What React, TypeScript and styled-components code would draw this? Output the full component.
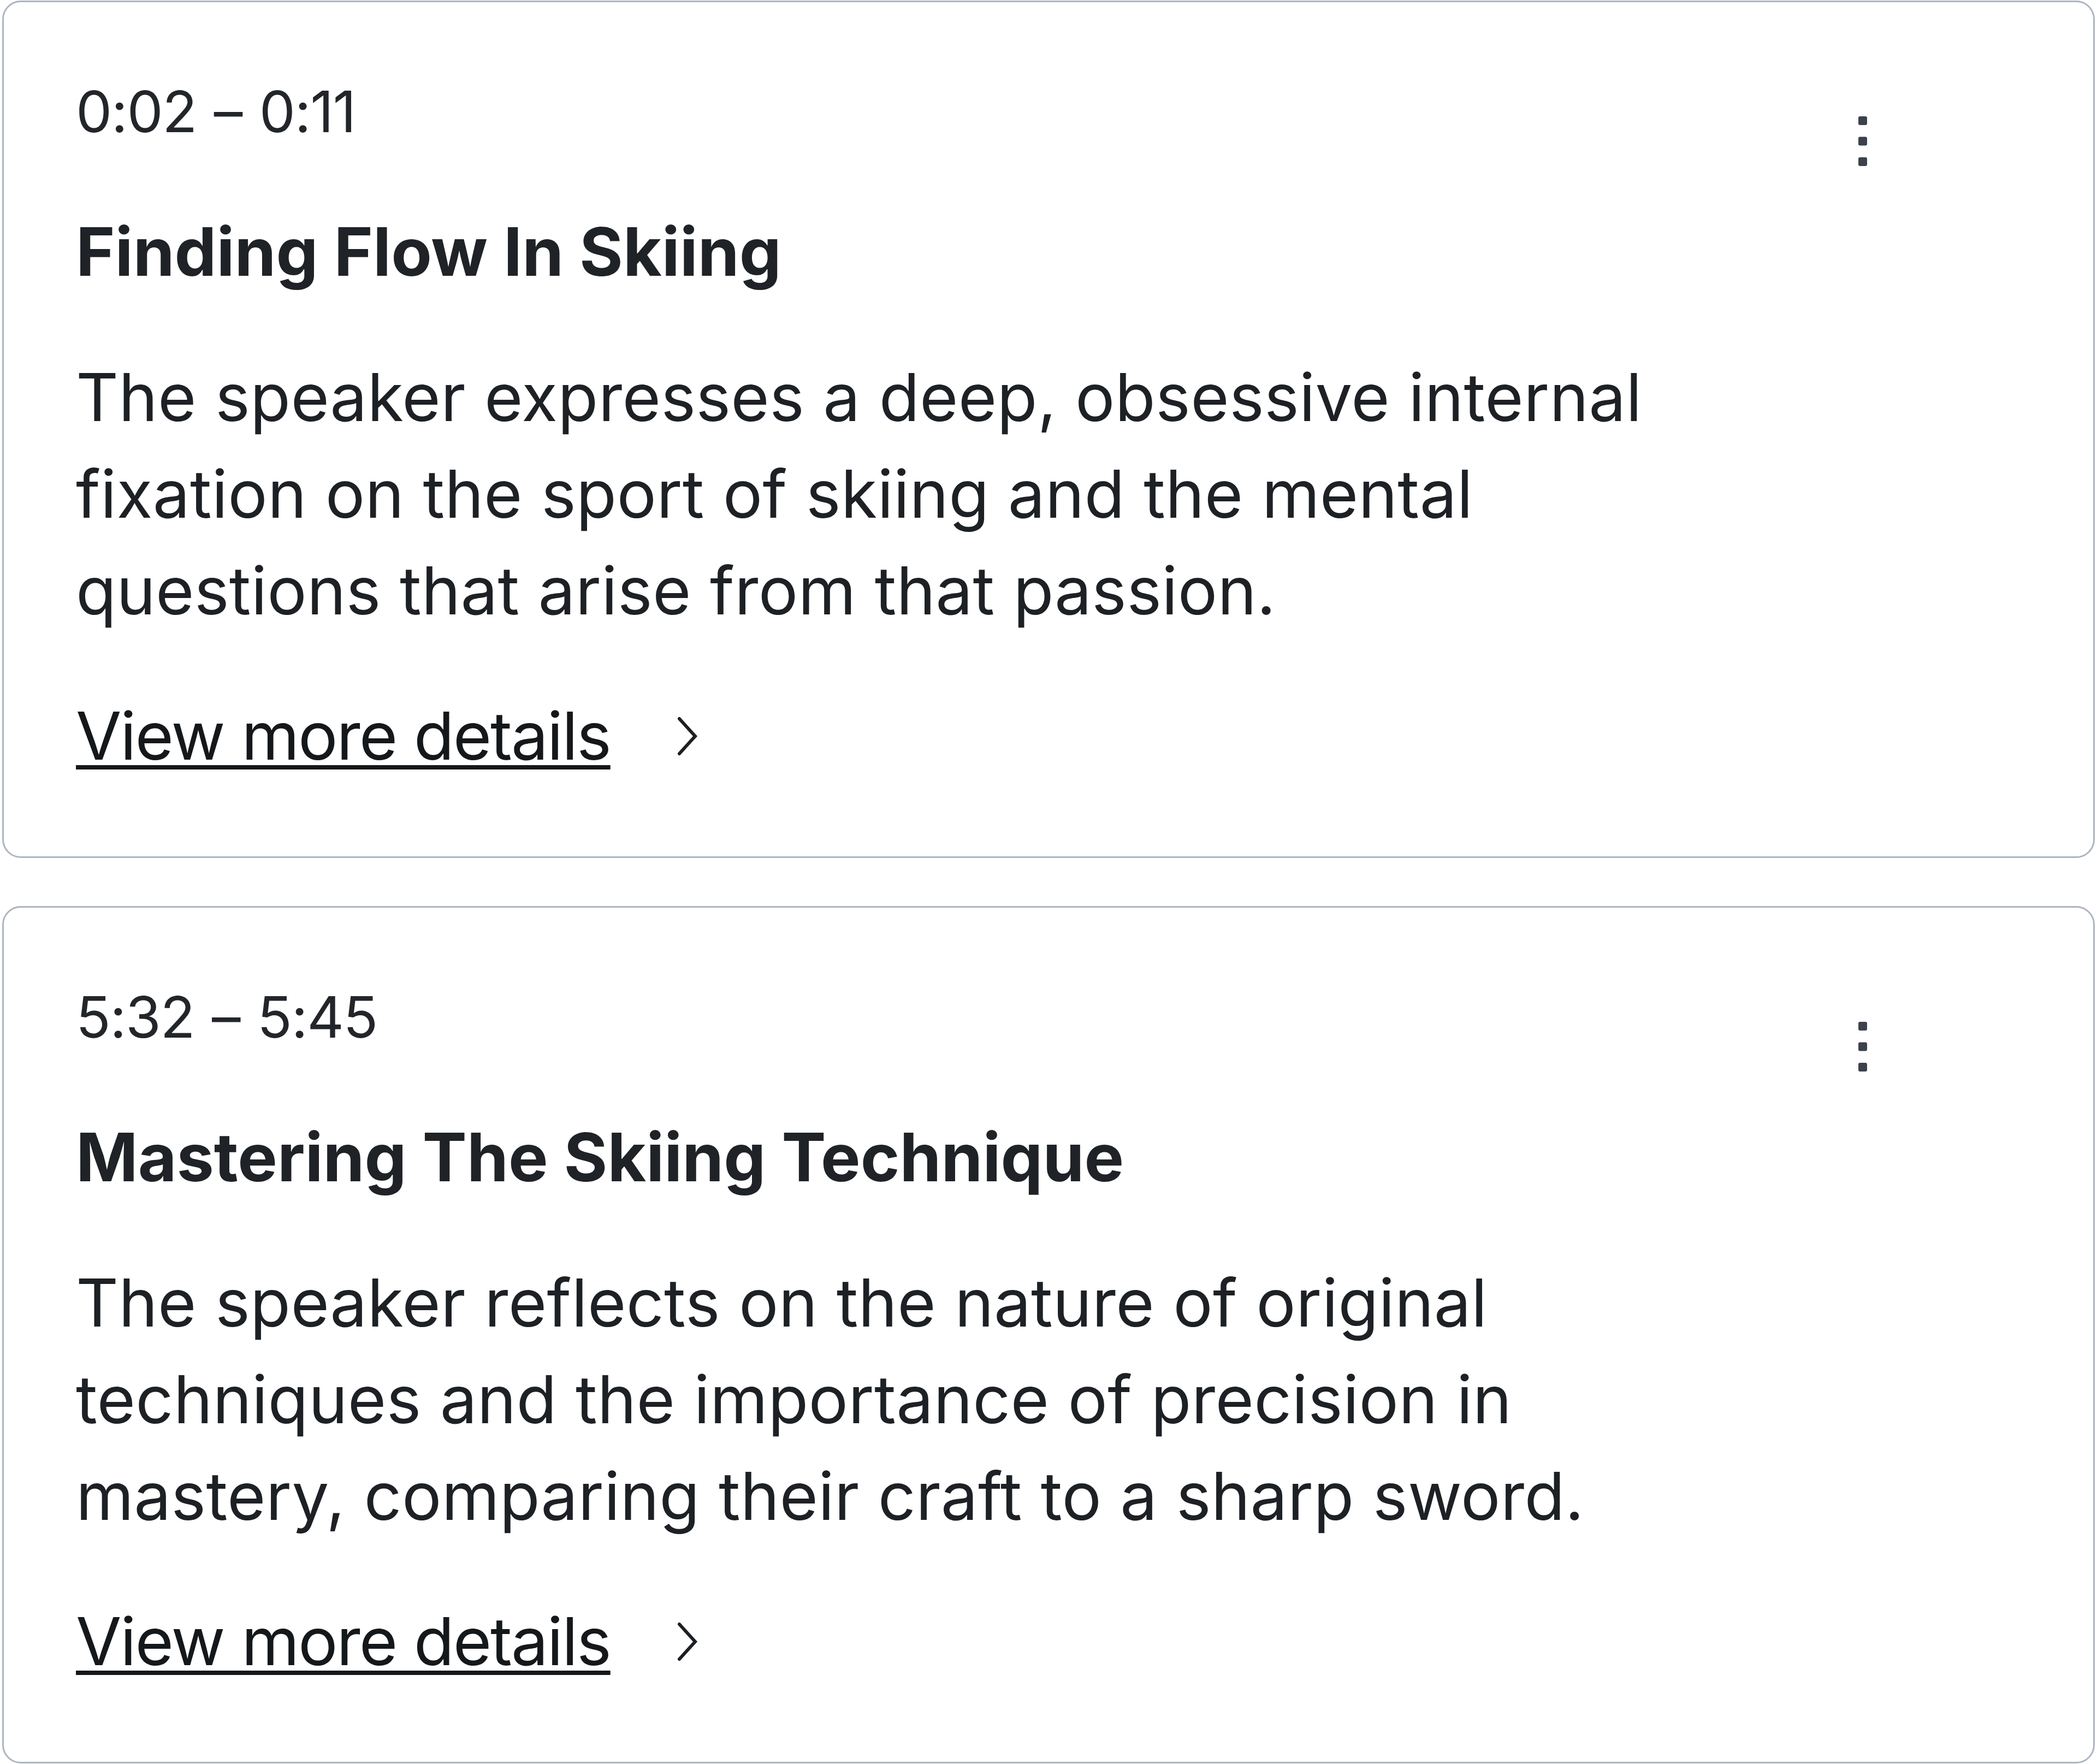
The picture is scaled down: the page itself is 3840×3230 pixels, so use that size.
import styled, { createGlobalStyle } from "styled-components";

type Chapter = {
  start: string;
  end: string;
  title: string;
  summary: string;
};

const chapters: Chapter[] = [
  {
    start: "0:02",
    end: "0:11",
    title: "Finding Flow In Skiing",
    summary:
      "The speaker expresses a deep, obsessive internal fixation on the sport of skiing and the mental questions that arise from that passion.",
  },
  {
    start: "5:32",
    end: "5:45",
    title: "Mastering The Skiing Technique",
    summary:
      "The speaker reflects on the nature of original techniques and the importance of precision in mastery, comparing their craft to a sharp sword.",
  },
];

const GlobalStyle = createGlobalStyle`
  html, body {
    margin: 0;
    padding: 0;
    background: #ffffff;
  }

  body {
    font-family: Inter, "Noto Sans", sans-serif;
    -webkit-font-smoothing: antialiased;
  }
`;

const KebabIcon = () => (
  <svg width="16" height="91" viewBox="0 0 16 91" aria-hidden="true">
    <rect x="0" y="0" width="16" height="16" rx="3" fill="#3b424c" />
    <rect x="0" y="37.5" width="16" height="16" rx="3" fill="#3b424c" />
    <rect x="0" y="75" width="16" height="16" rx="3" fill="#3b424c" />
  </svg>
);

const ChevronIcon = () => (
  <svg width="38" height="72" viewBox="0 0 38 72" aria-hidden="true">
    <polyline
      points="4,4 33,36 4,68"
      fill="none"
      stroke="#1c1f23"
      strokeWidth="6"
      strokeLinecap="round"
      strokeLinejoin="miter"
    />
  </svg>
);

const ChapterCard = ({ chapter }: { chapter: Chapter }) => (
  <CardStyled>
    <HeaderStyled>
      <TimeStyled>
        {chapter.start} – {chapter.end}
      </TimeStyled>
      <MenuButtonStyled type="button" aria-label="More options">
        <KebabIcon />
      </MenuButtonStyled>
    </HeaderStyled>
    <TitleStyled>{chapter.title}</TitleStyled>
    <SummaryStyled>{chapter.summary}</SummaryStyled>
    <LinkRowStyled href="#">
      <LinkTextStyled>View more details</LinkTextStyled>
      <ChevronIcon />
    </LinkRowStyled>
  </CardStyled>
);

export default function App() {
  return (
    <>
      <GlobalStyle />
      <ListStyled>
        {chapters.map((chapter) => (
          <ChapterCard key={chapter.start} chapter={chapter} />
        ))}
      </ListStyled>
    </>
  );
}

const ListStyled = styled.div`
  display: flex;
  flex-direction: column;
  gap: 88px;
  padding: 1px 4px 0 4px;
`;

const CardStyled = styled.article`
  border: 3px solid #adb5bf;
  border-radius: 34px;
  background: #ffffff;
  padding: 126px 130px 132px 132px;
  display: flex;
  flex-direction: column;
  align-items: flex-start;
`;

const HeaderStyled = styled.div`
  align-self: stretch;
  display: flex;
  justify-content: space-between;
  align-items: flex-start;
`;

const TimeStyled = styled.div`
  font-size: 105px;
  line-height: 147px;
  font-weight: 400;
  color: #222529;
  letter-spacing: -1.5px;
  word-spacing: 4px;
`;

const MenuButtonStyled = styled.button`
  border: none;
  background: transparent;
  padding: 0;
  margin: 80px 244px 0 0;
  width: 96px;
  height: 96px;
  display: flex;
  align-items: center;
  justify-content: center;
  cursor: pointer;
`;

const TitleStyled = styled.h2`
  margin: 76px 0 0 0;
  font-size: 122px;
  line-height: 158px;
  font-weight: 700;
  color: #1f2226;
  letter-spacing: 0;
`;

const SummaryStyled = styled.p`
  margin: 99px 0 0 0;
  max-width: 2960px;
  font-size: 121px;
  line-height: 177px;
  font-weight: 400;
  color: #1d2024;
  letter-spacing: 0.2px;
`;

const LinkRowStyled = styled.a`
  margin-top: 89px;
  display: inline-flex;
  align-items: center;
  gap: 122px;
  height: 177px;
  color: #15181b;
  text-decoration: none;
`;

const LinkTextStyled = styled.span`
  font-size: 121px;
  line-height: 177px;
  letter-spacing: -2.2px;
  text-decoration: underline;
  text-decoration-thickness: 8px;
  text-underline-offset: 10px;
`;
